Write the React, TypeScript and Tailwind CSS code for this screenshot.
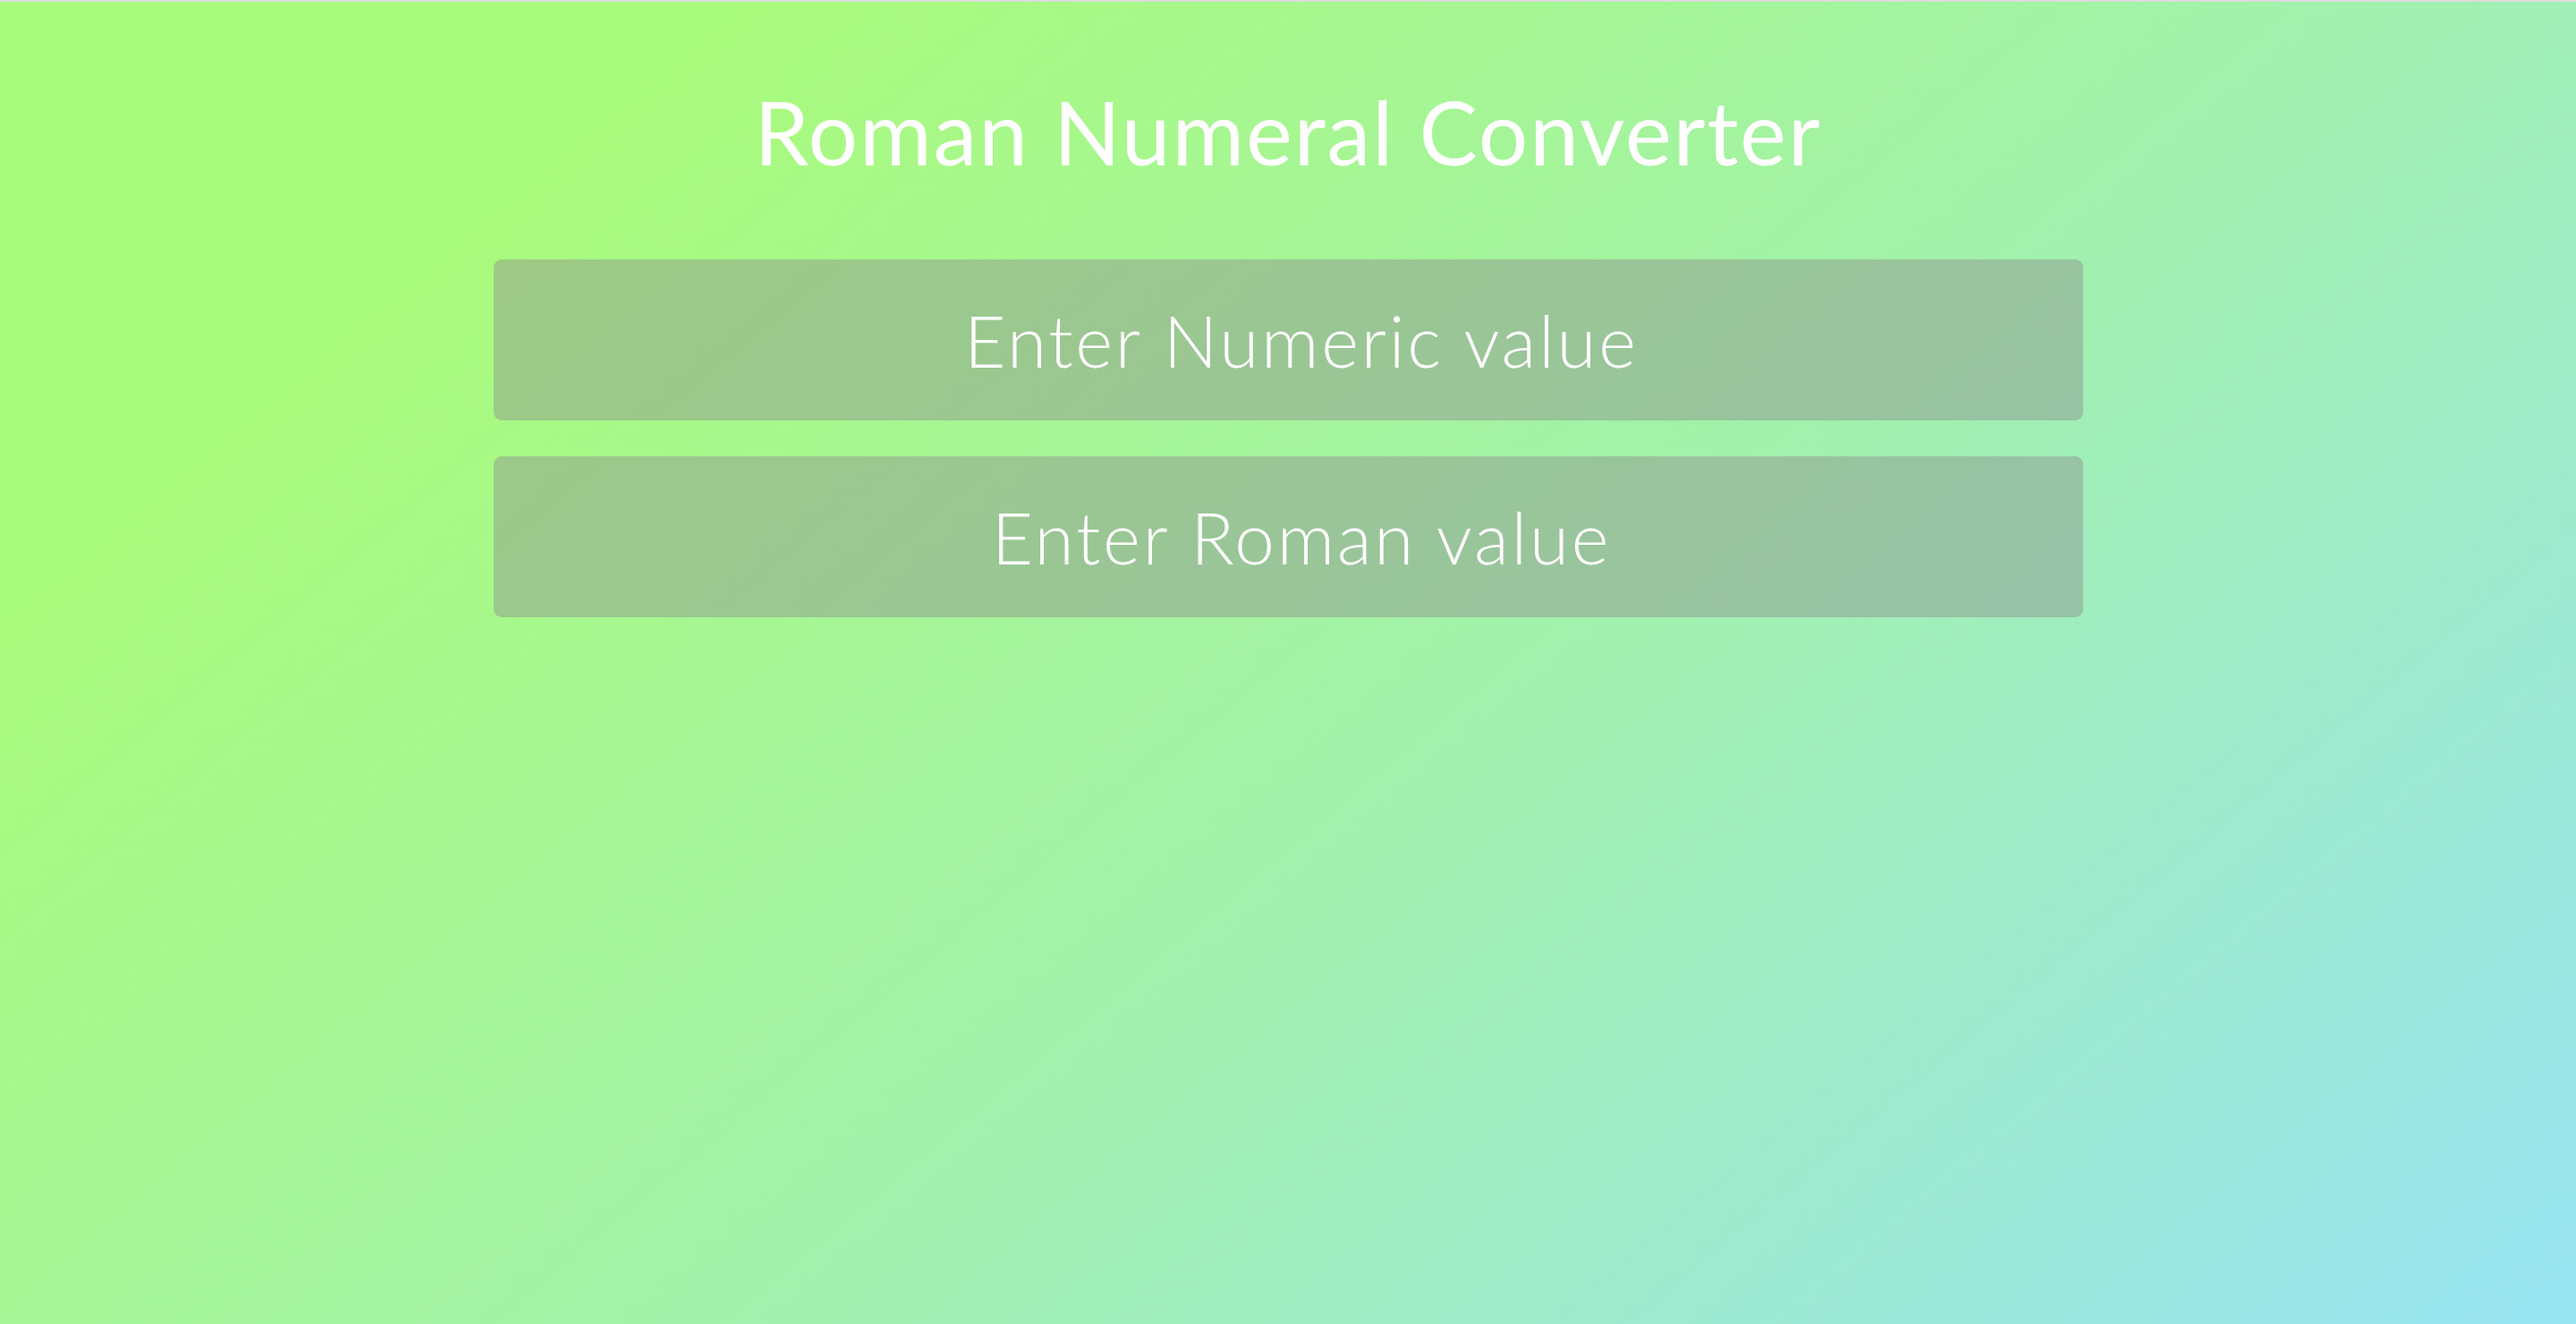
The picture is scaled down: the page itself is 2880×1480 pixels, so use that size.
import React from "react";

const App: React.FC = () => {
    return (
        <main className="min-h-screen w-full border-t-2 border-[#dcdcdc] bg-[linear-gradient(140deg,#a9fb7c_18%,#a2f1ab_55%,#97e3f3_100%)] font-['Lato','Open_Sans',sans-serif]">
            <div className="flex flex-col items-center pt-[96px]">
                <h1 className="text-[98px] leading-none font-normal tracking-[0.02em] text-white">Roman Numeral Converter</h1>
                <form className="mt-[94px] flex flex-col gap-[40px]">
                    <input
                        type="text"
                        placeholder="Enter Numeric value"
                        className="h-[180px] w-[1777px] rounded-[9px] bg-[#8e8e8e]/45 pl-[30px] text-center text-[80px] font-light tracking-[0.035em] text-white outline-none placeholder:text-white"
                    />
                    <input
                        type="text"
                        placeholder="Enter Roman value"
                        className="h-[180px] w-[1777px] rounded-[9px] bg-[#8e8e8e]/45 pl-[30px] text-center text-[80px] font-light tracking-[0.035em] text-white outline-none placeholder:text-white"
                    />
                </form>
            </div>
        </main>
    );
};

export default App;
